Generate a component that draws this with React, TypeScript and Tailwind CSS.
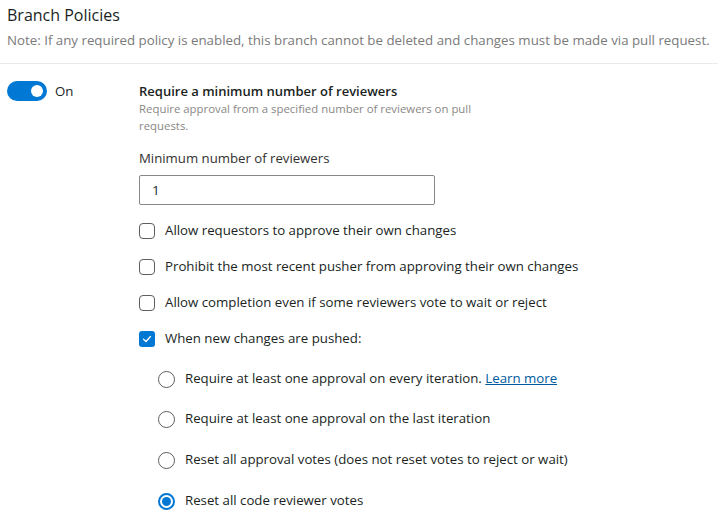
import React from "react";

const font = { fontFamily: '"Segoe UI", "Open Sans", "Noto Sans", sans-serif' };

function Checkbox({ checked, label }: { checked?: boolean; label: string }) {
  return (
    <div className="flex items-center h-[20px]">
      {checked ? (
        <div className="w-[16px] h-[16px] rounded-[3px] bg-[#0078d4] flex items-center justify-center">
          <svg width="10" height="10" viewBox="0 0 10 10">
            <path d="M1.5 5.2 L4 7.5 L8.5 2.5" stroke="white" strokeWidth="1.3" fill="none" strokeLinecap="round" strokeLinejoin="round" />
          </svg>
        </div>
      ) : (
        <div className="w-[16px] h-[16px] rounded-[4px] border border-[#605e5c] bg-white" />
      )}
      <span className="ml-[10px] text-[13.25px] text-[#201f1e]">{label}</span>
    </div>
  );
}

function Radio({ checked, children }: { checked?: boolean; children: React.ReactNode }) {
  return (
    <div className="flex items-center h-[20px]">
      {checked ? (
        <div className="w-[17px] h-[17px] rounded-full border-[2px] border-[#0078d4] bg-white flex items-center justify-center">
          <div className="w-[9px] h-[9px] rounded-full bg-[#0078d4]" />
        </div>
      ) : (
        <div className="w-[17px] h-[17px] rounded-full border border-[#605e5c] bg-white" />
      )}
      <span className="ml-[10px] text-[13.25px] text-[#201f1e]">{children}</span>
    </div>
  );
}

export default function App() {
  return (
    <div className="w-[718px] h-[520px] bg-white overflow-hidden" style={font}>
      <div className="px-[7px] pt-[4px]">
        <div className="text-[16px] leading-[22px] text-[#201f1e]">Branch Policies</div>
        <div className="mt-[6px] text-[13.3px] leading-[16px] text-[#7a7a7a] whitespace-nowrap">
          Note: If any required policy is enabled, this branch cannot be deleted and changes must be made via pull request.
        </div>
      </div>
      <div className="mt-[15px] border-b border-[#eaeaea]" />
      <div className="flex pl-[7px] pt-[17px]">
        <div className="w-[132px] flex items-start">
          <div className="flex items-center">
            <div className="w-[40px] h-[20px] rounded-full bg-[#0078d4] flex items-center justify-end pr-[4px]">
              <div className="w-[12px] h-[12px] rounded-full bg-white" />
            </div>
            <span className="ml-[8px] text-[13.25px] text-[#201f1e] mt-[1px]">On</span>
          </div>
        </div>
        <div className="flex flex-col">
          <div className="text-[13px] leading-[18px] font-semibold text-[#201f1e] mt-[1px]">
            Require a minimum number of reviewers
          </div>
          <div className="text-[11.4px] leading-[17px] text-[#8a8886] w-[340px]">
            Require approval from a specified number of reviewers on pull requests.
          </div>
          <div className="mt-[14px] text-[13.2px] leading-[20px] text-[#323130]">Minimum number of reviewers</div>
          <div className="mt-[7px] w-[296px] h-[30px] border border-[#8a8886] rounded-[2px] flex items-center pl-[12px] text-[13.5px] text-[#201f1e]">
            1
          </div>
          <div className="mt-[16px] flex flex-col gap-[16px]">
            <Checkbox label="Allow requestors to approve their own changes" />
            <Checkbox label="Prohibit the most recent pusher from approving their own changes" />
            <Checkbox label="Allow completion even if some reviewers vote to wait or reject" />
            <Checkbox checked label="When new changes are pushed:" />
          </div>
          <div className="pl-[19px] flex flex-col">
            <div className="mt-[20px]">
              <Radio>
                Require at least one approval on every iteration.{" "}
                <span className="text-[#005a9e] underline">Learn more</span>
              </Radio>
            </div>
            <div className="mt-[20px]">
              <Radio>Require at least one approval on the last iteration</Radio>
            </div>
            <div className="mt-[21px]">
              <Radio>Reset all approval votes (does not reset votes to reject or wait)</Radio>
            </div>
            <div className="mt-[21px]">
              <Radio checked>Reset all code reviewer votes</Radio>
            </div>
          </div>
        </div>
      </div>
    </div>
  );
}
